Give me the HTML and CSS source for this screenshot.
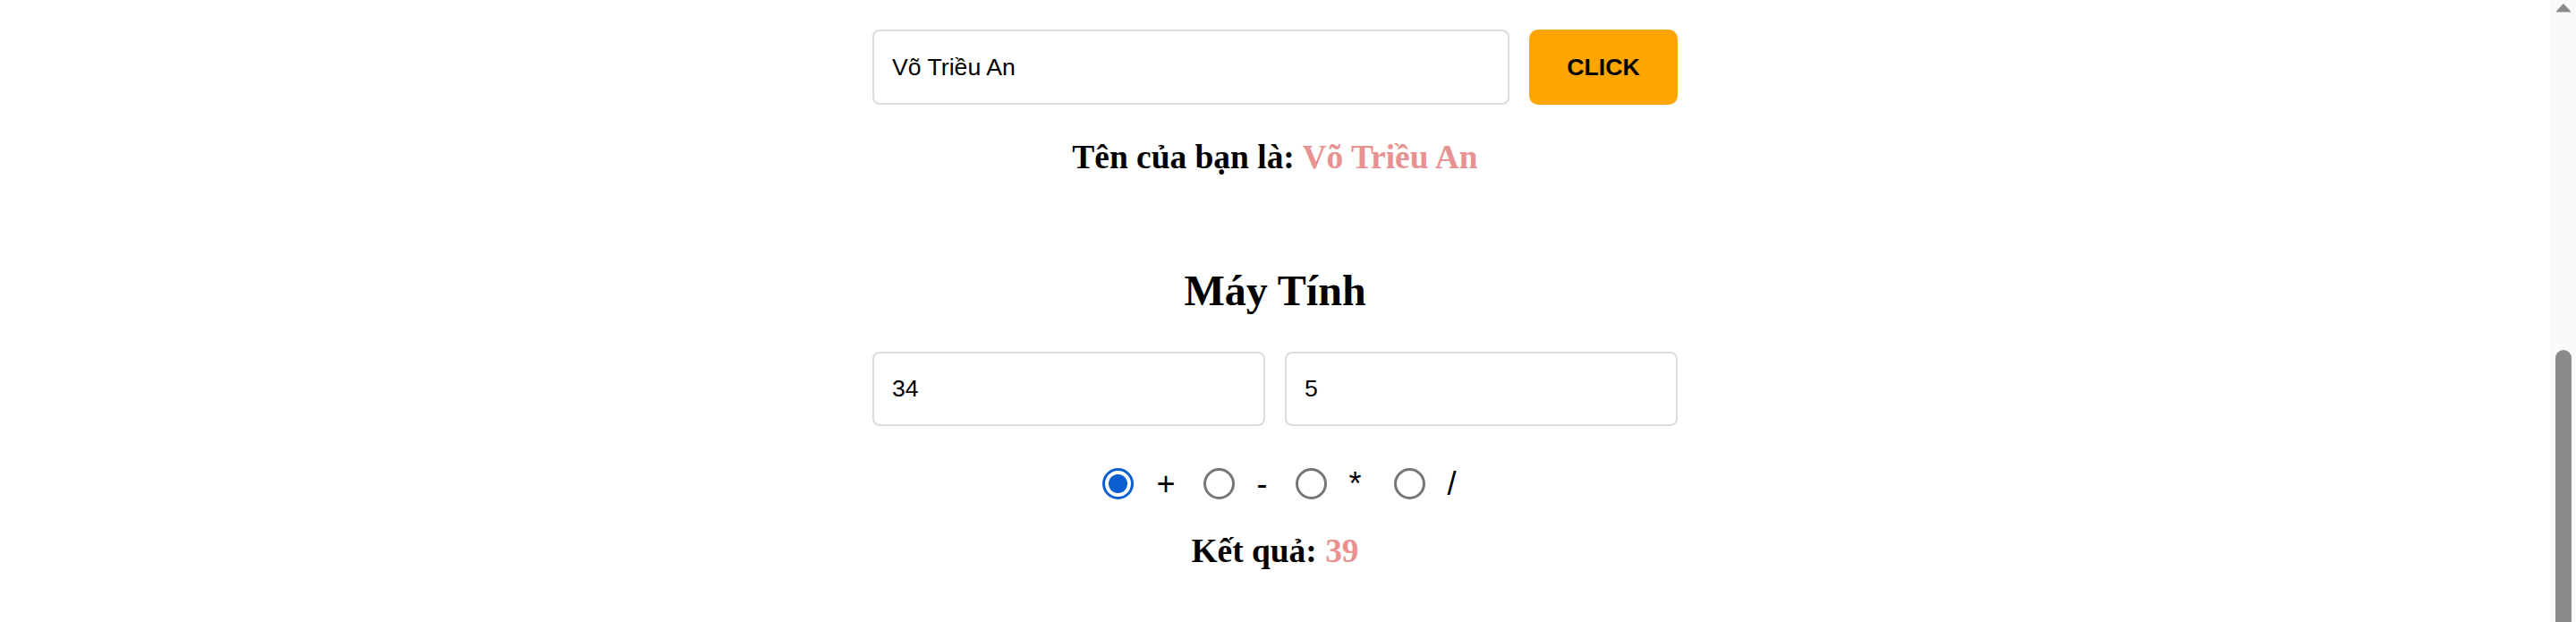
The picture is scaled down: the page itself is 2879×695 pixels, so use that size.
FILE: index.html
```html
<!DOCTYPE html>
<html lang="vi">
<head>
<meta charset="utf-8">
<title>Bài tập</title>
<link rel="stylesheet" href="styles.css">
</head>
<body>
<main class="page">
  <div class="name-row">
    <input class="field" type="text" value="Võ Triều An">
    <button class="btn" type="button">CLICK</button>
  </div>
  <h3 class="line name-line">Tên của bạn là: <span class="accent">Võ Triều An</span></h3>

  <h2 class="title">Máy Tính</h2>
  <div class="num-row">
    <input class="field" type="text" value="34">
    <input class="field" type="text" value="5">
  </div>
  <div class="ops">
    <label class="op"><input class="radio" type="radio" name="op" checked><span class="op-text">+</span></label>
    <label class="op"><input class="radio" type="radio" name="op"><span class="op-text">-</span></label>
    <label class="op"><input class="radio" type="radio" name="op"><span class="op-text">*</span></label>
    <label class="op"><input class="radio" type="radio" name="op"><span class="op-text">/</span></label>
  </div>
  <h3 class="line result-line">Kết quả: <span class="accent">39</span></h3>
</main>
<div class="scrollbar" aria-hidden="true">
  <svg class="scroll-arrow" width="18" height="11" viewBox="0 0 18 11">
    <path d="M9 1 L17 9.5 Q17.5 10.5 16.5 10.5 L1.5 10.5 Q0.5 10.5 1 9.5 Z" fill="#8a8a8a"/>
  </svg>
  <div class="scroll-thumb"></div>
</div>
</body>
</html>
```

FILE: styles.css
```css
html {
  background: #fff;
}

body {
  margin: 0;
  padding-right: 29px;
  font-family: "Liberation Serif", "Times New Roman", serif;
  color: #000;
  overflow: hidden;
}

.page {
  width: 900px;
  margin: 0 auto;
  padding: 33px 0 58px;
}

.name-row,
.num-row {
  display: flex;
  gap: 22px;
}

.name-row {
  height: 84px;
}

.num-row {
  height: 83px;
  margin-top: 41px;
}

.field {
  flex: 1 1 0;
  min-width: 0;
  box-sizing: border-box;
  height: 100%;
  margin: 0;
  padding: 0 20px;
  border: 2px solid #dcdcdc;
  border-radius: 8px;
  background: #fff;
  font-family: "Liberation Sans", Arial, sans-serif;
  font-size: 26.67px;
  color: #000;
  outline: none;
}

.btn {
  flex: 0 0 166px;
  height: 100%;
  margin: 0;
  padding: 0;
  border: none;
  border-radius: 10px;
  background: #ffa500;
  color: #000;
  font-family: "Liberation Sans", Arial, sans-serif;
  font-size: 26.67px;
  font-weight: 700;
}

.line {
  margin: 0;
  text-align: center;
  font-size: 37.44px;
  line-height: 43px;
  font-weight: 700;
}

.name-line {
  margin-top: 37px;
}

.accent {
  color: #e89191;
}

.title {
  margin: 100px 0 0;
  text-align: center;
  font-size: 48px;
  line-height: 55px;
  font-weight: 700;
}

.ops {
  display: flex;
  justify-content: center;
  align-items: center;
  gap: 31px;
  height: 35px;
  margin-top: 47px;
  padding-left: 10px;
}

.op {
  display: flex;
  align-items: center;
  gap: 25px;
}

.op:nth-child(3) {
  margin-right: 5px;
}

.radio {
  appearance: none;
  -webkit-appearance: none;
  box-sizing: border-box;
  width: 35px;
  height: 35px;
  margin: 0;
  border: 3px solid #767676;
  border-radius: 50%;
  background: #fff;
}

.radio:checked {
  border-color: #0b5fd0;
  background: radial-gradient(circle, #0b5fd0 0, #0b5fd0 10px, #fff 11px);
}

.op-text {
  font-family: "Liberation Sans", Arial, sans-serif;
  font-size: 36px;
  line-height: 35px;
}

.result-line {
  margin-top: 36px;
}

.scrollbar {
  position: fixed;
  top: 0;
  right: 0;
  width: 29px;
  height: 100%;
  background: #fafafa;
}

.scroll-arrow {
  position: absolute;
  top: 3px;
  left: 6px;
}

.scroll-thumb {
  position: absolute;
  top: 391px;
  left: 6px;
  width: 18px;
  height: 330px;
  border-radius: 9px;
  background: #8a8a8a;
}
```
